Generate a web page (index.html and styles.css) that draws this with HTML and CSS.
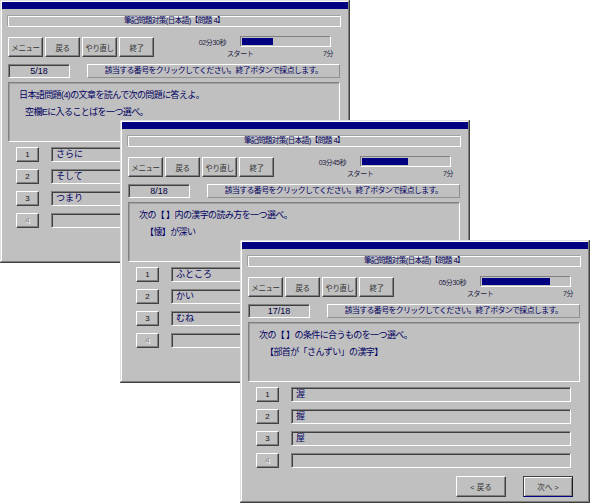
FILE: index.html
```html
<!DOCTYPE html>
<html lang="ja">
<head>
<meta charset="utf-8">
<title>筆記問題対策</title>
<link rel="stylesheet" href="styles.css">
</head>
<body>
<div class="desktop">

  <div class="win w1">
    <div class="titlebar"></div>
    <div class="caption">筆記問題対策(日本語)【問題 4】</div>
    <div class="toolbar">
      <div class="btns">
        <div class="btn">メニュー</div><div class="btn">戻る</div><div class="btn">やり直し</div><div class="btn">終了</div>
      </div>
      <div class="timer">
        <span class="time">02分30秒</span>
        <div class="bar"><div class="fill" style="width:36%"></div></div>
        <div class="scale"><span>スタート</span><span>7分</span></div>
      </div>
    </div>
    <div class="status">
      <div class="count">5/18</div>
      <div class="msg">該当する番号をクリックしてください。終了ボタンで採点します。</div>
    </div>
    <div class="question">
      <div>日本語問題(4)の文章を読んで次の問題に答えよ。</div>
      <div class="sub">空欄Eに入ることばを一つ選べ。</div>
    </div>
    <div class="answers">
      <div class="row"><div class="num">1</div><div class="field">さらに</div></div>
      <div class="row"><div class="num">2</div><div class="field">そして</div></div>
      <div class="row"><div class="num">3</div><div class="field">つまり</div></div>
      <div class="row"><div class="num off">4</div><div class="field"></div></div>
    </div>
    <div class="footer">
      <div class="fbtn">&lt; 戻る</div><div class="fbtn def">次へ &gt;</div>
    </div>
  </div>

  <div class="win w2">
    <div class="titlebar"></div>
    <div class="caption">筆記問題対策(日本語)【問題 4】</div>
    <div class="toolbar">
      <div class="btns">
        <div class="btn">メニュー</div><div class="btn">戻る</div><div class="btn">やり直し</div><div class="btn">終了</div>
      </div>
      <div class="timer">
        <span class="time">03分45秒</span>
        <div class="bar"><div class="fill" style="width:53%"></div></div>
        <div class="scale"><span>スタート</span><span>7分</span></div>
      </div>
    </div>
    <div class="status">
      <div class="count">8/18</div>
      <div class="msg">該当する番号をクリックしてください。終了ボタンで採点します。</div>
    </div>
    <div class="question">
      <div>次の【 】内の漢字の読み方を一つ選べ。</div>
      <div class="sub">【懐】が深い</div>
    </div>
    <div class="answers">
      <div class="row"><div class="num">1</div><div class="field">ふところ</div></div>
      <div class="row"><div class="num">2</div><div class="field">かい</div></div>
      <div class="row"><div class="num">3</div><div class="field">むね</div></div>
      <div class="row"><div class="num off">4</div><div class="field"></div></div>
    </div>
    <div class="footer">
      <div class="fbtn">&lt; 戻る</div><div class="fbtn def">次へ &gt;</div>
    </div>
  </div>

  <div class="win w3">
    <div class="titlebar"></div>
    <div class="caption">筆記問題対策(日本語)【問題 4】</div>
    <div class="toolbar">
      <div class="btns">
        <div class="btn">メニュー</div><div class="btn">戻る</div><div class="btn">やり直し</div><div class="btn">終了</div>
      </div>
      <div class="timer">
        <span class="time">05分30秒</span>
        <div class="bar"><div class="fill" style="width:78%"></div></div>
        <div class="scale"><span>スタート</span><span>7分</span></div>
      </div>
    </div>
    <div class="status">
      <div class="count">17/18</div>
      <div class="msg">該当する番号をクリックしてください。終了ボタンで採点します。</div>
    </div>
    <div class="question">
      <div>次の【 】の条件に合うものを一つ選べ。</div>
      <div class="sub">【部首が「さんずい」の漢字】</div>
    </div>
    <div class="answers">
      <div class="row"><div class="num">1</div><div class="field">渥</div></div>
      <div class="row"><div class="num">2</div><div class="field">握</div></div>
      <div class="row"><div class="num">3</div><div class="field">屋</div></div>
      <div class="row"><div class="num off">4</div><div class="field"></div></div>
    </div>
    <div class="footer">
      <div class="fbtn">&lt; 戻る</div><div class="fbtn def">次へ &gt;</div>
    </div>
  </div>

</div>
</body>
</html>
```
FILE: styles.css
```css
html, body {
  margin: 0;
  padding: 0;
  background: #ffffff;
}

body {
  font-family: "Liberation Sans", "Noto Sans CJK JP", sans-serif;
  color: #000000;
}

.desktop {
  position: relative;
  width: 590px;
  height: 504px;
  overflow: hidden;
}

.win {
  position: absolute;
  width: 350px;
  height: 263px;
  box-sizing: border-box;
  padding: 2px;
  background: #c0c0c0;
  display: flex;
  flex-direction: column;
  box-shadow: inset -1px -1px #404040, inset 1px 1px #dfdfdf,
              inset -2px -2px #808080, inset 2px 2px #ffffff;
}

.w1 { left: 0; top: 0; }
.w2 { left: 120px; top: 120px; }
.w3 { left: 240px; top: 240px; }

.titlebar {
  flex: none;
  height: 7px;
  background: #000080;
}

.caption {
  flex: none;
  margin: 6px 7px 0 5px;
  height: 12px;
  box-sizing: border-box;
  border: 1px solid;
  border-color: #a0a0a0 #ffffff #ffffff #a0a0a0;
  box-shadow: inset 1px 1px #ffffff;
  font-size: 7.5px;
  line-height: 10px;
  letter-spacing: -0.5px;
  text-align: center;
  color: #000060;
}

.toolbar {
  flex: none;
  display: flex;
  align-items: flex-start;
  height: 20px;
  margin-top: 10px;
  padding-left: 6px;
}

.btns {
  display: flex;
  gap: 2px;
}

.btn {
  width: 35px;
  height: 20px;
  box-sizing: border-box;
  border: 1px solid;
  border-color: #ffffff #404040 #404040 #ffffff;
  box-shadow: inset -1px -1px #808080;
  display: flex;
  align-items: center;
  justify-content: center;
  font-size: 7.5px;
  letter-spacing: -0.4px;
  color: #303030;
}

.timer {
  margin-left: auto;
  margin-right: 17px;
  margin-top: -1px;
  display: grid;
  grid-template-columns: auto 91px;
  column-gap: 14px;
  row-gap: 2px;
}

.time {
  align-self: center;
  text-align: right;
  font-size: 7px;
  letter-spacing: -0.4px;
  color: #202040;
}

.bar {
  height: 11px;
  box-sizing: border-box;
  border: 1px solid;
  border-color: #808080 #ffffff #ffffff #808080;
  padding: 1px;
}

.fill {
  height: 100%;
  background: #000080;
}

.scale {
  grid-column: 2;
  display: flex;
  justify-content: space-between;
  margin-left: -13px;
  margin-right: -2px;
  font-size: 7px;
  line-height: 10px;
  letter-spacing: -0.4px;
  color: #202040;
}

.status {
  flex: none;
  display: flex;
  gap: 17px;
  height: 14px;
  margin: 7px 0 0 6px;
}

.count {
  width: 62px;
  box-sizing: border-box;
  border: 1px solid;
  border-color: #808080 #ffffff #ffffff #808080;
  box-shadow: inset 1px 1px #404040;
  text-align: center;
  font-size: 9px;
  line-height: 12px;
  color: #000040;
}

.msg {
  width: 253px;
  box-sizing: border-box;
  border: 1px solid;
  border-color: #ffffff #909090 #909090 #ffffff;
  text-align: center;
  font-size: 8px;
  line-height: 12px;
  letter-spacing: -0.7px;
  color: #000060;
}

.question {
  flex: none;
  width: 332px;
  height: 60px;
  box-sizing: border-box;
  margin: 4px 0 0 6px;
  padding: 4px 0 0 10px;
  border: 1px solid;
  border-color: #808080 #ffffff #ffffff #808080;
  box-shadow: inset 1px 1px #a0a0a0;
  font-size: 9px;
  line-height: 17px;
  letter-spacing: -0.6px;
  color: #000060;
}

.question .sub {
  padding-left: 6px;
}

.answers {
  flex: none;
  display: flex;
  flex-direction: column;
  gap: 7px;
  margin-top: 5px;
  padding-left: 14px;
}

.row {
  display: flex;
  gap: 12px;
  height: 15px;
}

.num {
  width: 23px;
  height: 15px;
  box-sizing: border-box;
  border: 1px solid;
  border-color: #ffffff #404040 #404040 #ffffff;
  box-shadow: inset -1px -1px #808080;
  display: flex;
  align-items: center;
  justify-content: center;
  font-size: 8px;
  color: #101010;
}

.num.off {
  color: #8c8c8c;
  text-shadow: 1px 1px #ffffff;
}

.field {
  width: 280px;
  height: 15px;
  box-sizing: border-box;
  border: 1px solid;
  border-color: #808080 #ffffff #ffffff #808080;
  box-shadow: inset 1px 1px #404040;
  padding-left: 4px;
  font-size: 9px;
  line-height: 13px;
  color: #000060;
}

.footer {
  flex: none;
  display: flex;
  justify-content: flex-end;
  gap: 17px;
  margin-top: 8px;
  padding-right: 15px;
}

.fbtn {
  width: 50px;
  height: 21px;
  box-sizing: border-box;
  border: 1px solid;
  border-color: #ffffff #404040 #404040 #ffffff;
  box-shadow: inset -1px -1px #808080;
  display: flex;
  align-items: center;
  justify-content: center;
  font-size: 7.5px;
  color: #303030;
}

.fbtn.def {
  border-color: #404040 #202020 #000080 #404040;
  box-shadow: inset 1px 1px #ffffff, inset -1px -1px #808080;
}
```
